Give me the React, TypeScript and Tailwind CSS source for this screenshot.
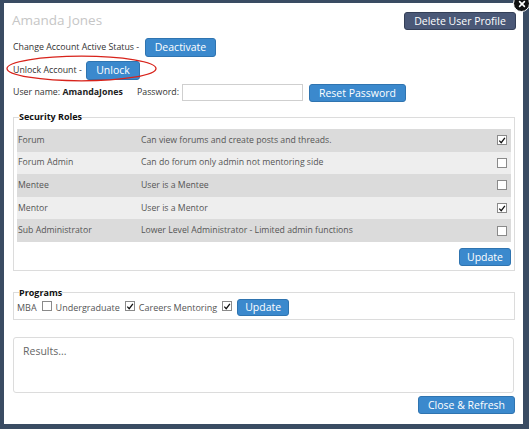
import React from "react";

function Box({ checked }: { checked: boolean }) {
  return (
    <span className="inline-flex h-[10px] w-[10px] shrink-0 items-center justify-center border border-[#8a8a8a] bg-white">
      {checked && (
        <svg viewBox="0 0 10 10" className="h-[9px] w-[9px]">
          <path d="M1.6 5.2 L4 7.7 L8.6 1.6" fill="none" stroke="#111" strokeWidth="1.6" />
        </svg>
      )}
    </span>
  );
}

const btn =
  "flex items-center justify-center rounded-[3px] border border-[#2f74b0] bg-[#3b89cd] text-[10.5px] leading-none text-white";

const roles = [
  { name: "Forum", desc: "Can view forums and create posts and threads.", checked: true },
  { name: "Forum Admin", desc: "Can do forum only admin not mentoring side", checked: false },
  { name: "Mentee", desc: "User is a Mentee", checked: false },
  { name: "Mentor", desc: "User is a Mentor", checked: true },
  { name: "Sub Administrator", desc: "Lower Level Administrator - Limited admin functions", checked: false },
];

export default function App() {
  return (
    <div className="h-[429px] w-[529px] overflow-hidden bg-[#3a4c63] pl-[4px] pt-[3px] font-['Open_Sans',sans-serif]">
      <div className="relative h-[421px] w-[519px] bg-white pl-[8px] pr-[7px] pt-[9px]">
        {/* close */}
        <div className="absolute left-[509px] top-[-8px] flex h-[17px] w-[17px] items-center justify-center rounded-full border border-white bg-[#111]">
          <svg viewBox="0 0 10 10" className="h-[8px] w-[8px]">
            <path d="M2 2 L8 8 M8 2 L2 8" stroke="white" strokeWidth="2" strokeLinecap="round" />
          </svg>
        </div>

        {/* red ellipse */}
        <svg className="pointer-events-none absolute left-[2px] top-[52px]" width="151" height="27" viewBox="0 0 151 27">
          <ellipse cx="75.5" cy="13.5" rx="74.5" ry="12.3" fill="none" stroke="#d8231b" strokeWidth="1.3" />
        </svg>

        <div className="flex h-[18px] items-center justify-between">
          <span className="text-[13.5px] leading-none text-[#c6c6c6]">Amanda Jones</span>
          <button className="flex h-[18px] w-[112px] items-center justify-center rounded-[3px] border border-[#343f57] bg-[#4a5877] text-[10.5px] leading-none text-white">
            Delete User Profile
          </button>
        </div>

        <div className="mt-[8px] flex h-[19px] items-center text-[8.8px] text-[#333]">
          <span className="w-[133px] pl-[1px]">Change Account Active Status -</span>
          <button className={`${btn} h-[19px] w-[71px]`}>Deactivate</button>
        </div>

        <div className="mt-[4px] flex h-[19px] items-center text-[8.8px] text-[#333]">
          <span className="w-[74px] pl-[1px]">Unlock Account -</span>
          <button className={`${btn} h-[19px] w-[54px]`}>Unlock</button>
        </div>

        <div className="mt-[4px] flex h-[18px] items-start text-[8.8px] text-[#333]">
          <span className="flex h-[17px] w-[125px] items-center pl-[1px]">
            User name:&nbsp;<b className="font-bold text-[#222]">AmandaJones</b>
          </span>
          <span className="flex h-[17px] w-[45px] items-center">Password:</span>
          <span className="h-[17px] w-[121px] border border-[#cfcfcf] bg-white" />
          <button className={`${btn} ml-[6px] h-[18px] w-[97px]`}>Reset Password</button>
        </div>

        <fieldset className="ml-[1px] mt-[9px] w-[502px] border border-[#dcdcdc] px-[3px] pb-[4px]">
          <legend className="ml-[2px] text-[9px] font-bold leading-[12px] text-[#111]">Security Roles</legend>
          <div className="mt-[6px]">
            {roles.map((r, i) => (
              <div
                key={r.name}
                className={`flex h-[22.6px] items-center pl-[1px] pr-[4px] text-[8.7px] text-[#555] ${
                  i % 2 === 0 ? "bg-[#dbdbdb]" : "bg-[#eeeeee]"
                }`}
              >
                <span className="w-[123px]">{r.name}</span>
                <span className="flex-1">{r.desc}</span>
                <Box checked={r.checked} />
              </div>
            ))}
          </div>
          <div className="mt-[6px] flex justify-end">
            <button className={`${btn} h-[18px] w-[52px]`}>Update</button>
          </div>
        </fieldset>

        <fieldset className="ml-[1px] mt-[16px] w-[502px] border border-[#dcdcdc] px-[3px] pb-[3px]">
          <legend className="ml-[2px] text-[9px] font-bold leading-[12px] text-[#111]">Programs</legend>
          <div className="flex h-[17.3px] items-center text-[9px] text-[#555]">
            <span>MBA</span>
            <span className="ml-[5px]"><Box checked={false} /></span>
            <span className="ml-[4px]">Undergraduate</span>
            <span className="ml-[5px]"><Box checked={true} /></span>
            <span className="ml-[4px]">Careers Mentoring</span>
            <span className="ml-[5px]"><Box checked={true} /></span>
            <button className={`${btn} ml-[5px] h-[17.3px] w-[52px]`}>Update</button>
          </div>
        </fieldset>

        <div className="ml-[1px] mt-[16.5px] h-[56px] w-[501px] rounded-[3px] border border-[#dcdcdc] px-[9px] pt-[6px] text-[10.5px] text-[#666]">
          Results...
        </div>

        <div className="mt-[3.7px] flex w-[503px] justify-end">
          <button className={`${btn} h-[17.5px] w-[97px]`}>Close &amp; Refresh</button>
        </div>
      </div>
    </div>
  );
}
